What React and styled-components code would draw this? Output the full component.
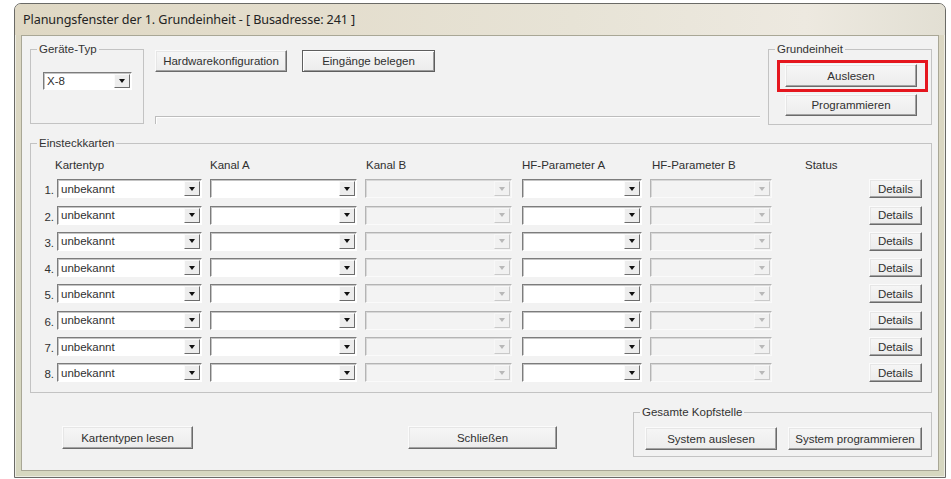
import React from "react"
import styled, { createGlobalStyle } from "styled-components"

const GlobalStyle = createGlobalStyle`
  html, body {
    margin: 0;
    padding: 0;
    background: #ffffff;
  }
  body {
    font-family: "Liberation Sans", Arial, sans-serif;
    font-size: 11.5px;
    color: #303030;
  }
`

const FACE = "#f2f2f2"

const Window = styled.div`
  margin: 3px 0 0 14px;
  width: 932px;
  height: 475px;
  box-sizing: border-box;
  display: flex;
  flex-direction: column;
  border: 1px solid #6a6a66;
  border-radius: 7px 7px 0 0;
  background: linear-gradient(180deg, #dcd7c3 0%, #d6d7c0 100%);
  box-shadow: inset 0 0 0 1px rgba(255, 255, 255, 0.55);
`

const TitleBar = styled.div`
  height: 31px;
  flex: none;
  display: flex;
  align-items: center;
  padding: 0 8px;
  border-radius: 6px 6px 0 0;
  background: linear-gradient(
    90deg,
    #dfd8c4 0%,
    #e4dece 35%,
    #e7e3d6 60%,
    #ede9e0 85%,
    #e2dfd3 100%
  );
`

const Title = styled.span`
  font-family: "Noto Sans", "Liberation Sans", sans-serif;
  font-size: 12.6px;
  color: #232323;
  letter-spacing: -0.1px;
`

const Client = styled.div`
  flex: 1;
  margin: 0 6px 6px;
  border: 1px solid #a9a796;
  background: ${FACE};
  display: flex;
  flex-direction: column;
  padding: 13px 6px 0 8px;
`

const TopSection = styled.div`
  display: flex;
  height: 76px;
`

const Group = styled.div`
  position: relative;
  box-sizing: border-box;
  border: 1px solid #c3c3c3;
  width: ${(p) => (p.$w ? `${p.$w}px` : "auto")};
  height: ${(p) => (p.$h ? `${p.$h}px` : "auto")};
  flex: none;
`

const Legend = styled.span`
  position: absolute;
  top: -8px;
  left: 6px;
  padding: 0 2px;
  line-height: 14px;
  background: ${FACE};
  color: #333333;
`

const TypeGroup = styled(Group)`
  padding: 22px 0 0 12px;
`

const MiddleColumn = styled.div`
  flex: 1;
  margin: 0 8px 0 11px;
  display: flex;
  flex-direction: column;
`

const ButtonRow = styled.div`
  display: flex;
  gap: ${(p) => p.$gap || 15}px;
  margin-top: ${(p) => p.$top || 0}px;
`

const PanelEdge = styled.div`
  margin-top: auto;
  margin-bottom: 1px;
  height: 7px;
  border-top: 1px solid #bdbdbd;
  border-left: 1px solid #bdbdbd;
  box-shadow: inset 1px 1px 0 #ffffff;
`

const UnitGroup = styled(Group)`
  padding: 10px 3px 0 8px;
  display: flex;
  flex-direction: column;
`

const Highlight = styled.div`
  border: 3px solid #e5161e;
  padding: 1px 8px 2px 5px;
`

const Button = styled.button`
  width: ${(p) => p.$w}px;
  height: ${(p) => p.$h || 23}px;
  margin: ${(p) => p.$m || "0"};
  padding: 0;
  box-sizing: border-box;
  font-family: "Liberation Sans", Arial, sans-serif;
  font-size: 11.5px;
  color: #303030;
  border: 1px solid;
  border-color: ${(p) =>
    p.$default ? "#5e5e5e" : "#fbfbfb #6b6b6b #6b6b6b #fbfbfb"};
  background: linear-gradient(180deg, #f6f6f6 0%, #ececec 100%);
  box-shadow: ${(p) =>
    p.$default
      ? "inset 1px 1px 0 #ffffff, inset -1px -1px 0 #9c9c9c"
      : "inset -1px -1px 0 #a3a3a3, inset 1px 1px 0 #e6e6e6"};
  flex: none;
`

const ComboBox = styled.div`
  display: flex;
  box-sizing: border-box;
  width: ${(p) => p.$w}px;
  height: ${(p) => p.$h || 19}px;
  justify-self: ${(p) => (p.$end ? "end" : "start")};
  border: 1px solid;
  border-color: ${(p) =>
    p.$disabled ? "#b4b4b4 #fafafa #fafafa #b4b4b4" : "#7c7c7c #ffffff #ffffff #7c7c7c"};
  box-shadow: ${(p) =>
    p.$disabled ? "inset 1px 1px 0 #d8d8d8" : "inset 1px 1px 0 #c4c4c4"};
  background: ${(p) => (p.$disabled ? "#f3f3f3" : "#ffffff")};
`

const ComboText = styled.span`
  flex: 1;
  padding-left: 3px;
  display: flex;
  align-items: center;
  white-space: nowrap;
  overflow: hidden;
`

const DropButton = styled.span`
  width: 16px;
  margin: 1px 1px 1px 0;
  box-sizing: border-box;
  display: flex;
  align-items: center;
  justify-content: center;
  border: 1px solid;
  border-color: ${(p) =>
    p.$disabled ? "#f8f8f8 #c9c9c9 #c9c9c9 #f8f8f8" : "#fbfbfb #6d6d6d #6d6d6d #fbfbfb"};
  background: ${(p) => (p.$disabled ? "#f1f1f1" : "#ededed")};
  &::after {
    content: "";
    width: 0;
    height: 0;
    border-left: 3.5px solid transparent;
    border-right: 3.5px solid transparent;
    border-top: 4px solid ${(p) => (p.$disabled ? "#b8b8b8" : "#111111")};
  }
`

const Combo = ({ value, w, h, disabled, end }) => (
  <ComboBox $w={w} $h={h} $disabled={disabled} $end={end}>
    <ComboText>{value}</ComboText>
    <DropButton $disabled={disabled} />
  </ComboBox>
)

const CardGroup = styled(Group)`
  margin-top: 18px;
  padding: 14px 9px 10px 0;
`

const CardGrid = styled.div`
  display: grid;
  grid-template-columns: 18px 145px 147px 147px 122px 122px 1fr 53px;
  grid-template-rows: 14px;
  grid-auto-rows: 19px;
  column-gap: 8px;
  row-gap: 7.3px;
  align-items: center;
`

const Heading = styled.span`
  margin-left: ${(p) => p.$shift || 0}px;
  white-space: nowrap;
  line-height: 14px;
`

const RowNum = styled.span`
  justify-self: end;
  margin-right: -5px;
  padding-top: 3px;
`

const StatusCell = styled.span``

const BottomBar = styled.div`
  display: flex;
  align-items: flex-start;
  margin-top: 19px;
`

const HeadGroup = styled(Group)`
  margin-left: auto;
  padding: 14px 0 0 11px;
`

const rows = [1, 2, 3, 4, 5, 6, 7, 8]

export default function App() {
  return (
    <>
      <GlobalStyle />
      <Window>
        <TitleBar>
          <Title>Planungsfenster der 1. Grundeinheit - [ Busadresse: 241 ]</Title>
        </TitleBar>
        <Client>
          <TopSection>
            <TypeGroup $w={114} $h={75}>
              <Legend>Geräte-Typ</Legend>
              <Combo value="X-8" w={89} h={18} />
            </TypeGroup>
            <MiddleColumn>
              <ButtonRow $top={1}>
                <Button $w={132} $h={22}>Hardwarekonfiguration</Button>
                <Button $w={133} $h={22} $default>
                  Eingänge belegen
                </Button>
              </ButtonRow>
              <PanelEdge />
            </MiddleColumn>
            <UnitGroup $w={164} $h={76}>
              <Legend>Grundeinheit</Legend>
              <Highlight>
                <Button $w={132} $h={23}>Auslesen</Button>
              </Highlight>
              <Button $w={132} $h={22} $m="2px 0 0 8px">
                Programmieren
              </Button>
            </UnitGroup>
          </TopSection>

          <CardGroup>
            <Legend>Einsteckkarten</Legend>
            <CardGrid>
              <span />
              <Heading $shift={-2}>Kartentyp</Heading>
              <Heading>Kanal A</Heading>
              <Heading $shift={1}>Kanal B</Heading>
              <Heading $shift={2}>HF-Parameter A</Heading>
              <Heading $shift={2}>HF-Parameter B</Heading>
              <Heading $shift={25}>Status</Heading>
              <span />
              {rows.map((n) => (
                <React.Fragment key={n}>
                  <RowNum>{n}.</RowNum>
                  <Combo value="unbekannt" w={145} />
                  <Combo w={147} />
                  <Combo w={147} disabled />
                  <Combo w={120} end />
                  <Combo w={122} disabled />
                  <StatusCell />
                  <Button $w={53} $h={19}>Details</Button>
                </React.Fragment>
              ))}
            </CardGrid>
          </CardGroup>

          <BottomBar>
            <Button $w={131} $m="14px 0 0 32px">Kartentypen lesen</Button>
            <Button $w={149} $m="14px 0 0 215px">Schließen</Button>
            <HeadGroup $w={299} $h={45}>
              <Legend>Gesamte Kopfstelle</Legend>
              <ButtonRow $gap={11}>
                <Button $w={132}>System auslesen</Button>
                <Button $w={134}>System programmieren</Button>
              </ButtonRow>
            </HeadGroup>
          </BottomBar>
        </Client>
      </Window>
    </>
  )
}
